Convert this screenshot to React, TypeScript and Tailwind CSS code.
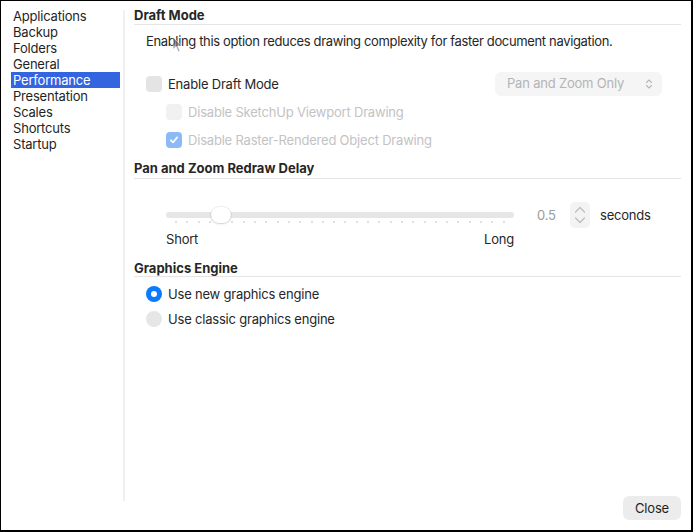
import React from "react";

const items = ["Applications","Backup","Folders","General","Performance","Presentation","Scales","Shortcuts","Startup"];

function Check({ checked, faded }: { checked?: boolean; faded?: boolean }) {
  if (checked) {
    return (
      <span className="w-4 h-4 rounded-[4px] bg-[#8cbaf6] flex items-center justify-center shrink-0">
        <svg width="10" height="10" viewBox="0 0 10 10"><path d="M1.8 5.2 L4 7.4 L8.2 2.4" fill="none" stroke="white" strokeWidth="1.7" strokeLinecap="round" strokeLinejoin="round"/></svg>
      </span>
    );
  }
  return <span className={`w-4 h-4 rounded-[4px] shrink-0 ${faded ? "bg-[#f1f1f1]" : "bg-[#e4e4e4]"}`} />;
}

const ticks = Array.from({ length: 30 });

export default function App() {
  return (
    <div className="w-[693px] h-[532px] bg-white border-l border-t border-r-2 border-b-2 border-black flex relative text-[13px] tracking-[-0.2px] text-[#262626] font-['Inter','Liberation_Sans',sans-serif] overflow-hidden">
      {/* sidebar */}
      <div className="w-[122px] shrink-0 pt-[7px] pl-[10px]">
        {items.map((it) => (
          <div key={it} className={`h-4 leading-4 pl-[2px] w-[109px] ${it === "Performance" ? "bg-[#3465e0] text-white" : "text-[#1f1f1f]"}`}>{it}</div>
        ))}
      </div>
      <div className="w-[2px] h-[491px] mt-[9px] bg-[#f0f0f0] shrink-0" />
      {/* main */}
      <div className="flex-1 flex flex-col pl-[9px] pr-[10px] pb-[10px]">
        <div className="mt-[6px] leading-4 font-bold tracking-normal pb-[1px] border-b border-[#e5e5e5]">Draft Mode</div>
        <div className="mt-[8px] leading-4 pl-[12px] tracking-[-0.35px]">Enabling this option reduces drawing complexity for faster document navigation.</div>
        <div className="mt-[23px] h-6 flex items-center justify-between pl-[12px] pr-[19px]">
          <div className="flex items-center gap-[6px]">
            <Check />
            <span className="leading-4">Enable Draft Mode</span>
          </div>
          <div className="w-[167px] h-6 rounded-[6px] bg-[#f5f5f5] flex items-center justify-between pl-[12px] pr-[9px] text-[#b4b4b4]">
            <span>Pan and Zoom Only</span>
            <svg width="8" height="12" viewBox="0 0 8 12"><path d="M1.5 4.5 L4 2 L6.5 4.5 M1.5 7.5 L4 10 L6.5 7.5" fill="none" stroke="#b8b8b8" strokeWidth="1.1" strokeLinecap="round" strokeLinejoin="round"/></svg>
          </div>
        </div>
        <div className="mt-[8px] h-4 flex items-center gap-[6px] pl-[32px]">
          <Check faded />
          <span className="leading-4 text-[#c3c3c3]">Disable SketchUp Viewport Drawing</span>
        </div>
        <div className="mt-[12px] h-4 flex items-center gap-[6px] pl-[32px]">
          <Check checked />
          <span className="leading-4 text-[#c3c3c3]">Disable Raster-Rendered Object Drawing</span>
        </div>

        <div className="mt-[12px] leading-4 font-bold tracking-normal pb-[2px] border-b border-[#e5e5e5]">Pan and Zoom Redraw Delay</div>
        <div className="mt-[23px] h-[26px] flex items-center pl-[32px]">
          <div className="w-[348px] h-4 relative flex items-center">
            <div className="w-full h-[6px] rounded-full bg-[#e6e6e6]" />
            <div className="absolute left-[9px] right-[9px] top-[14px] h-[2px] flex justify-between">
              {ticks.map((_, i) => (
                <span key={i} className="w-[2px] h-[2px] rounded-full bg-[#d6d6d6]" />
              ))}
            </div>
            <div className="absolute left-[45px] top-0 w-5 h-4 rounded-full bg-white shadow-[0_0.5px_2px_rgba(0,0,0,0.25),0_0_0_0.5px_rgba(0,0,0,0.05)]" />
          </div>
          <span className="ml-[23px] w-[17px] text-[#9b9b9b] leading-4">0.5</span>
          <div className="ml-[16px] w-5 h-[26px] rounded-[5px] bg-[#f3f3f3] flex flex-col items-center justify-center gap-[4px]">
            <svg width="12" height="7" viewBox="0 0 12 7"><path d="M1.5 6 L6 1.5 L10.5 6" fill="none" stroke="#bdbdbd" strokeWidth="1.2" strokeLinecap="round" strokeLinejoin="round"/></svg>
            <svg width="12" height="7" viewBox="0 0 12 7"><path d="M1.5 1 L6 5.5 L10.5 1" fill="none" stroke="#bdbdbd" strokeWidth="1.2" strokeLinecap="round" strokeLinejoin="round"/></svg>
          </div>
          <span className="ml-[10px] leading-4">seconds</span>
        </div>
        <div className="mt-[3px] ml-[32px] w-[348px] flex justify-between leading-4">
          <span>Short</span>
          <span>Long</span>
        </div>

        <div className="mt-[13px] leading-4 font-bold tracking-normal border-b border-[#e5e5e5]">Graphics Engine</div>
        <div className="mt-[9px] h-4 flex items-center gap-[6px] pl-[12px]">
          <span className="w-4 h-4 rounded-full bg-[#0a7aff] flex items-center justify-center shrink-0">
            <span className="w-[6px] h-[6px] rounded-full bg-white" />
          </span>
          <span className="leading-4">Use new graphics engine</span>
        </div>
        <div className="mt-[9px] h-4 flex items-center gap-[6px] pl-[12px]">
          <span className="w-4 h-4 rounded-full bg-[#e6e6e6] shrink-0" />
          <span className="leading-4">Use classic graphics engine</span>
        </div>

        <div className="mt-auto flex justify-end">
          <button className="w-[58px] h-6 rounded-[6px] bg-[#ececec] text-[#1f1f1f] leading-4">Close</button>
        </div>
      </div>

      {/* mouse cursor */}
      <svg className="absolute left-[171px] top-[35px] opacity-60" width="11" height="17" viewBox="0 0 11 17">
        <path d="M1 1 L1 13.5 L4 10.7 L6.2 15.8 L8 15 L5.9 10.1 L10 10.1 Z" fill="#666" stroke="white" strokeWidth="0.8" strokeLinejoin="round"/>
      </svg>
    </div>
  );
}
